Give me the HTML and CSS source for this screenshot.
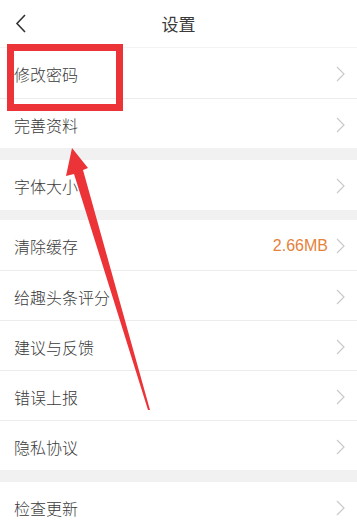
FILE: index.html
```html
<!DOCTYPE html>
<html lang="zh-CN">
<head>
    <meta charset="UTF-8">
    <meta name="viewport" content="width=device-width, initial-scale=1.0">
    <title>设置</title>
    <link rel="stylesheet" href="styles.css">
</head>
<body>
    <div class="page">
        <div class="header">
            <svg class="back" width="12" height="20" viewBox="0 0 12 20"><polyline points="10,1 2,9.5 10,18" fill="none" stroke="#333" stroke-width="1.6"/></svg>
            <div class="title">设置</div>
        </div>

        <div class="group">
            <div class="row"><span class="label">修改密码</span><span class="arrow"></span></div>
            <div class="row"><span class="label">完善资料</span><span class="arrow"></span></div>
        </div>
        <div class="gap"></div>
        <div class="group">
            <div class="row"><span class="label">字体大小</span><span class="arrow"></span></div>
        </div>
        <div class="gap small"></div>
        <div class="group">
            <div class="row"><span class="label">清除缓存</span><span class="value">2.66MB</span><span class="arrow"></span></div>
            <div class="row"><span class="label">给趣头条评分</span><span class="arrow"></span></div>
            <div class="row"><span class="label">建议与反馈</span><span class="arrow"></span></div>
            <div class="row"><span class="label">错误上报</span><span class="arrow"></span></div>
            <div class="row"><span class="label">隐私协议</span><span class="arrow"></span></div>
        </div>
        <div class="gap"></div>
        <div class="group">
            <div class="row"><span class="label">检查更新</span><span class="arrow"></span></div>
        </div>

        <!-- annotation drawn over the screenshot -->
        <svg class="mark" width="357" height="521" viewBox="0 0 357 521">
            <rect x="10.5" y="47.5" width="109" height="60" fill="none" stroke="#ec3338" stroke-width="7"/>
            <polygon points="72,148 88,168 83,170 150,410 148,410 74,174 66,176" fill="#ec3338"/>
        </svg>
    </div>

    <script>
        document.querySelectorAll('.arrow').forEach(function (el) {
            el.innerHTML = '<svg width="9" height="16" viewBox="0 0 9 16"><polyline points="1,1 8,8 1,15" fill="none" stroke="#c9c9c9" stroke-width="1.2"/></svg>';
        });
    </script>
</body>
</html>
```

FILE: styles.css
```css
body {
    margin: 0;
    background: #fff;
    font-family: "Noto Sans CJK SC", "Noto Sans", sans-serif;
    color: #3a3a3a;
    overflow: hidden;
}
.page {
    position: relative;
    width: 357px;
    height: 521px;
    overflow: hidden;
}
.header {
    height: 47px;
    border-bottom: 1px solid #f3f3f3;
    display: flex;
    align-items: center;
    justify-content: center;
    position: relative;
}
.back {
    position: absolute;
    left: 15px;
    top: 14px;
}
.title {
    font-size: 17px;
    color: #3a3a3a;
}
.row {
    box-sizing: border-box;
    height: 50px;
    display: flex;
    align-items: center;
    padding: 2px 12px 0 14px;
    border-top: 1px solid #ececec;
}
.row:first-child {
    border-top: none;
}
.label {
    flex: 1;
    font-size: 16px;
    font-weight: 300;
}
.value {
    font-family: "Liberation Sans", Arial, sans-serif;
    font-size: 16px;
    color: #e4823c;
    margin-right: 8px;
}
.arrow {
    width: 9px;
    height: 16px;
    display: flex;
}
.gap {
    height: 12px;
    background: #f1f1f2;
}
.gap.small {
    height: 10px;
}
.mark {
    position: absolute;
    left: 0;
    top: 0;
    pointer-events: none;
}
```
